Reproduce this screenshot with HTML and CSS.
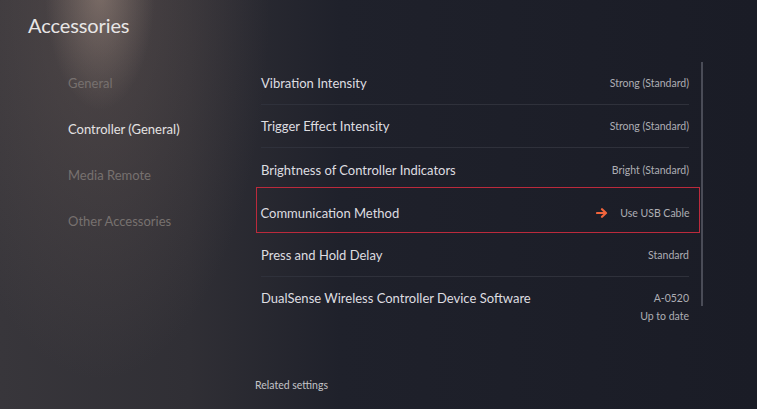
FILE: index.html
```html
<!DOCTYPE html>
<html>
<head>
<meta charset="utf-8">
<link rel="stylesheet" href="styles.css">
</head>
<body>
<div class="screen">
  <header class="header"><h1 class="title">Accessories</h1></header>
  <div class="main">
    <nav class="nav">
      <div class="nav-item">General</div>
      <div class="nav-item active">Controller (General)</div>
      <div class="nav-item">Media Remote</div>
      <div class="nav-item">Other Accessories</div>
    </nav>
    <section class="list">
      <div class="row divided"><span class="label">Vibration Intensity</span><span class="value">Strong (Standard)</span></div>
      <div class="row divided"><span class="label">Trigger Effect Intensity</span><span class="value">Strong (Standard)</span></div>
      <div class="row"><span class="label">Brightness of Controller Indicators</span><span class="value">Bright (Standard)</span></div>
      <div class="row focus"><span class="label">Communication Method</span><span class="value"><svg class="arrow" width="12" height="10" viewBox="0 0 12 10"><path d="M1 5H9.5M6 1.2L10 5L6 8.8" fill="none" stroke="#f0643c" stroke-width="2.2" stroke-linecap="round" stroke-linejoin="round"/></svg>Use USB Cable</span></div>
      <div class="row divided"><span class="label">Press and Hold Delay</span><span class="value">Standard</span></div>
      <div class="row tall"><span class="label">DualSense Wireless Controller Device Software</span><span class="value stack"><span>A-0520</span><span>Up to date</span></span></div>
    </section>
    <div class="scrollbar"></div>
  </div>
  <footer class="footer">Related settings</footer>
</div>
</body>
</html>
```

FILE: styles.css
```css
html, body {
  margin: 0;
  padding: 0;
}
body {
  width: 757px;
  height: 409px;
  overflow: hidden;
  font-family: Lato, "Open Sans", sans-serif;
}
.screen {
  width: 757px;
  height: 409px;
  display: flex;
  flex-direction: column;
  background:
    radial-gradient(ellipse 55px 120px at 100px -10px, rgba(190,165,150,0.40), rgba(190,165,150,0) 100%),
    radial-gradient(ellipse 170px 380px at 100px 0px, rgba(115,98,92,0.40), rgba(115,98,92,0) 100%),
    linear-gradient(90deg, #38363b 0%, #302f35 25%, #1f212b 45%, #1a1c26 100%);
}
.header {
  height: 44px;
  padding-left: 28px;
  display: flex;
  align-items: flex-start;
}
.title {
  margin: 13px 0 0 0;
  font-weight: 400;
  font-size: 20px;
  line-height: 24px;
  color: #e8e6e6;
  letter-spacing: -0.1px;
}
.main {
  display: flex;
  height: 325px;
  padding-top: 18px;
  box-sizing: border-box;
}
.nav {
  width: 193px;
  padding-left: 68px;
  display: flex;
  flex-direction: column;
}
.nav-item {
  height: 46px;
  line-height: 43px;
  font-size: 13px;
  color: #77716f;
}
.nav-item.active {
  color: #e4e2e2;
}
.list {
  width: 428px;
  display: flex;
  flex-direction: column;
}
.row {
  height: 43px;
  box-sizing: border-box;
  display: flex;
  align-items: center;
  justify-content: space-between;
}
.row.divided {
  border-bottom: 1px solid #2f313b;
}
.label {
  font-size: 13px;
  color: #dedde0;
}
.value {
  font-size: 10.5px;
  color: #aeaeb4;
  display: flex;
  align-items: center;
}
.row.focus {
  height: 46px;
  margin: -4px -11px 1px -5px;
  padding: 5px 9.5px 0 3.5px;
  border: 1.5px solid #bb2a3c;
}
.arrow {
  margin-right: 12px;
}
.row.tall {
  height: 56px;
  align-items: flex-start;
  padding-top: 13px;
}
.value.stack {
  flex-direction: column;
  align-items: flex-end;
  gap: 6px;
  margin-top: 2px;
}
.scrollbar {
  width: 1.5px;
  height: 244px;
  margin-left: 12px;
  background: #4a4c57;
}
.footer {
  padding-left: 255px;
  padding-top: 10px;
  font-size: 10.5px;
  color: #c4c4c8;
}
```
